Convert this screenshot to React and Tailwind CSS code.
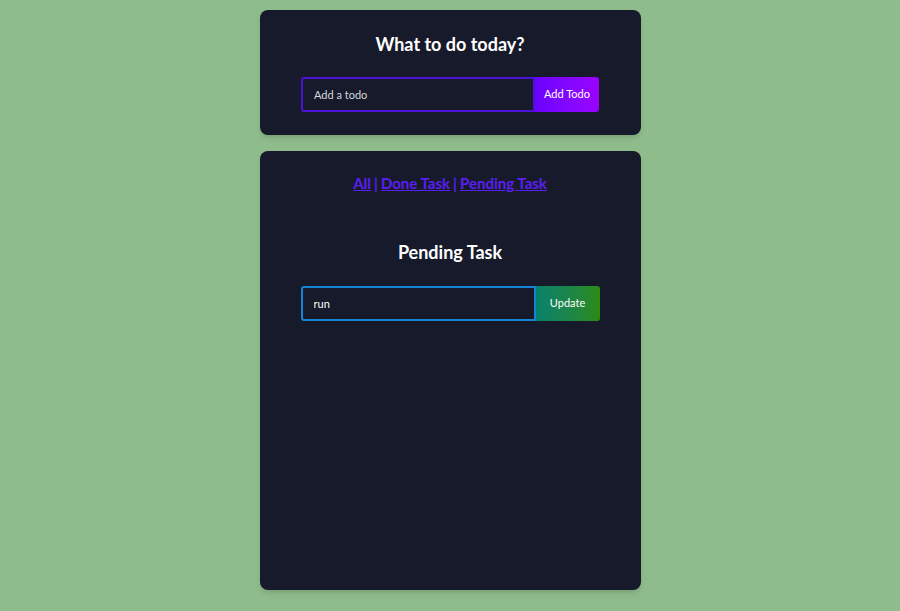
const App = () => {
  const font = { fontFamily: 'Lato, "Noto Sans", sans-serif' };

  return (
    <div className="min-h-[611px] w-full bg-[#8fbc8b] pt-[10px] pb-[21px]" style={font}>
      {/* Add todo card */}
      <div className="mx-auto flex h-[125px] w-[381px] flex-col items-center rounded-lg bg-[#171a2b] shadow-md">
        <h1 className="mt-[22px] text-[18px] font-bold leading-6 text-white">What to do today?</h1>
        <div className="mt-[21px] flex h-[35px] w-[298px]">
          <input
            type="text"
            placeholder="Add a todo"
            className="h-full flex-1 rounded-l-[3px] border-2 border-[#4a12d4] bg-[#171a2b] px-[11px] text-[11px] text-white placeholder:text-[#d6d6de] focus:outline-none"
          />
          <button className="h-full w-[64px] rounded-r-[3px] bg-gradient-to-r from-[#6a00ff] to-[#9a00ff] text-[11px] text-white">
            Add Todo
          </button>
        </div>
      </div>

      {/* List card */}
      <div className="mx-auto mt-[16px] flex h-[439px] w-[381px] flex-col items-center rounded-lg bg-[#171a2b] shadow-md">
        <div className="mt-[22px] flex items-center gap-[3px] text-[15px] font-bold leading-5 text-[#5a1ff0]">
          <a href="#" className="underline">All</a>
          <span>|</span>
          <a href="#" className="underline">Done Task</a>
          <span>|</span>
          <a href="#" className="underline">Pending Task</a>
        </div>
        <h2 className="mt-[47px] text-[18px] font-bold leading-6 text-white">Pending Task</h2>
        <div className="mt-[22px] flex h-[35px] w-[299px]">
          <input
            type="text"
            defaultValue="run"
            className="h-full flex-1 rounded-l-[3px] border-2 border-[#1584d2] bg-[#171a2b] px-[11px] text-[11px] text-white focus:outline-none"
          />
          <button className="h-full w-[64px] rounded-r-[3px] bg-gradient-to-r from-[#07806a] to-[#2b8a0e] text-[11px] text-white">
            Update
          </button>
        </div>
      </div>
    </div>
  );
};

export default App;
